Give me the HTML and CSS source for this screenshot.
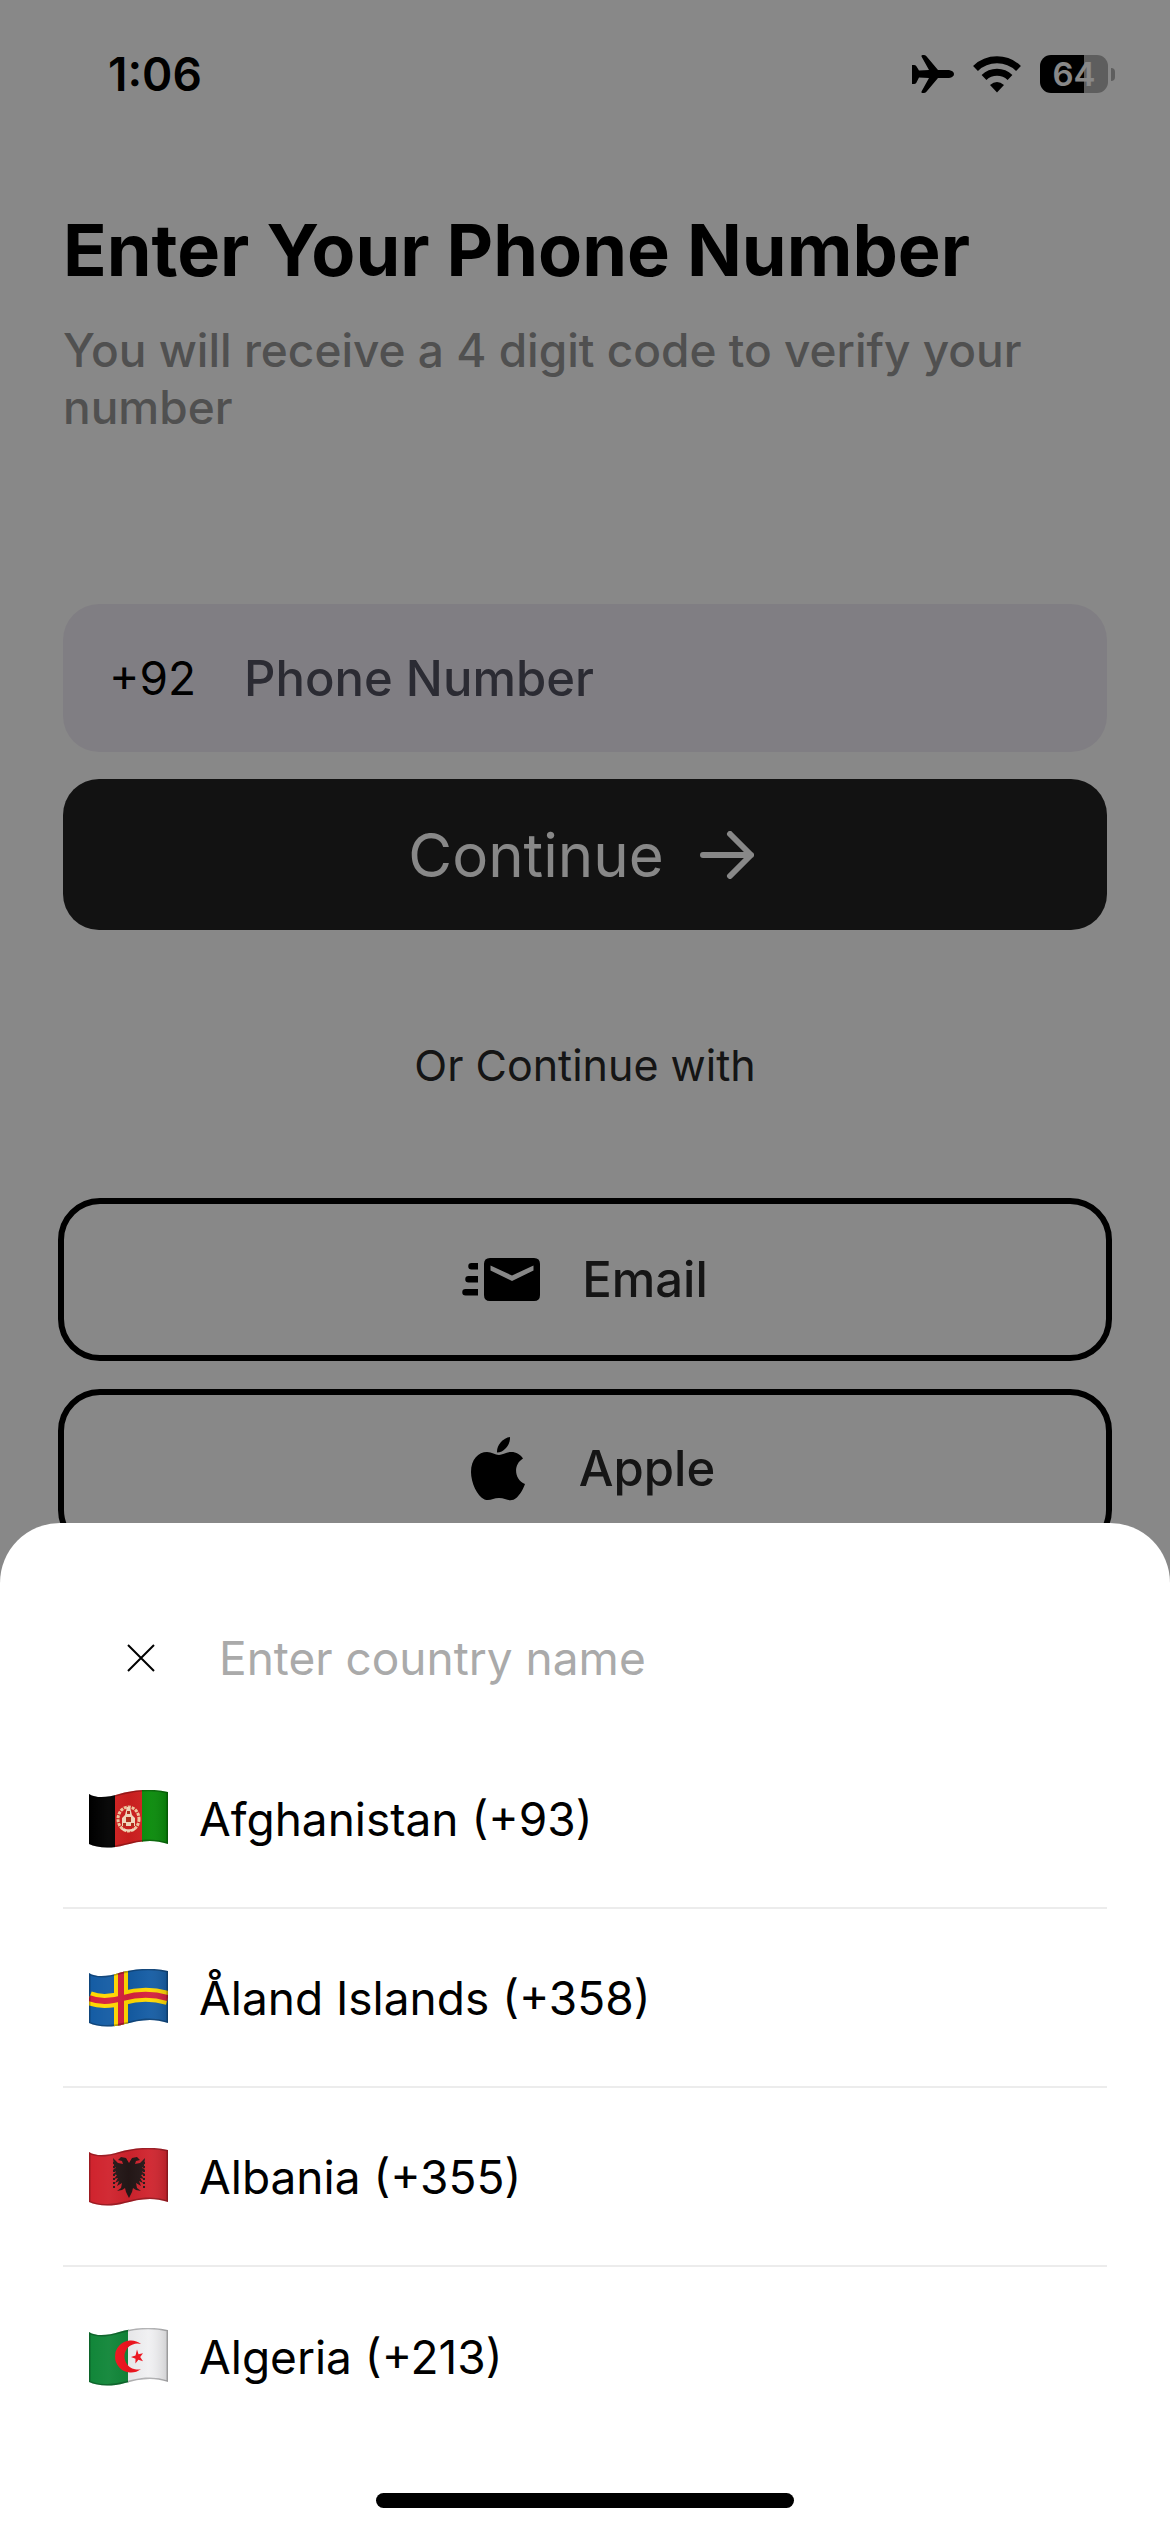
FILE: index.html
```html
<!DOCTYPE html>
<html lang="en">
<head>
<meta charset="utf-8">
<meta name="viewport" content="width=device-width, initial-scale=1">
<title>Enter Your Phone Number</title>
<link rel="stylesheet" href="styles.css">
</head>
<body>
<div class="screen">
  <header class="status">
    <span class="status-time">1:06</span>
    <div class="status-icons">
      <svg width="42" height="38" viewBox="0 0 42 38" aria-label="Airplane mode"><path d="M0 10h2q1.500 0 2.200 1L7 15.500l10-.5L9.500 1.500Q9 0 10.500 0h1.300q1.500 0 2.400 1L26 15h11q5 1 5 4t-5 4H26L14.200 37q-.9 1-2.400 1h-1.300q-1.500 0-1-1.500L17 23l-10-.5L4.200 28q-.7 1-2.200 1H0z"/></svg>
      <svg width="50" height="37" viewBox="0 0 50 37" aria-label="Wi-Fi"><g fill="none" stroke="#000" stroke-width="7"><path d="M3.500 12.500a31 31 0 0 1 43 0"/><path d="M12 21.500a19 19 0 0 1 26 0"/></g><path d="M25 36.500l-7-7.500q7-6 14 0z"/></svg>
      <div class="battery"><span class="battery-body">64</span><span class="battery-tip"></span></div>
    </div>
  </header>
  <main class="content">
    <h1 class="title">Enter Your Phone Number</h1>
    <p class="subtitle">You will receive a 4 digit code to verify your number</p>
    <form class="phone-form">
      <div class="phone-field">
        <span class="dial-code">+92</span>
        <input class="phone-input" type="tel" placeholder="Phone Number" aria-label="Phone Number">
      </div>
      <button class="continue" type="button">Continue
        <svg width="54" height="48" viewBox="0 0 54 48" fill="none" stroke="#fff" stroke-width="6" stroke-linecap="round" stroke-linejoin="round"><path d="M3 24h48M30 3l21 21-21 21"/></svg>
      </button>
    </form>
    <p class="divider-text">Or Continue with</p>
    <div class="providers">
      <button class="provider" type="button">
        <svg width="78" height="43" viewBox="0 0 78 43"><path d="M16 5v6.500H9.500a3.250 3.250 0 0 1 0-6.500zM16 18v6.500H6.500a3.250 3.250 0 0 1 0-6.500zM16 31v6.500H3.500a3.250 3.250 0 0 1 0-6.500z"/><path fill-rule="evenodd" d="M28 0h44q6 0 6 6v31q0 6-6 6H28q-6 0-6-6V6q0-6 6-6zm.5 7.500v5L50 23l21.500-10.500v-5L50 17.500z"/></svg>
        Email
      </button>
      <button class="provider provider-apple" type="button">
        <svg width="54" height="64" viewBox="0 0 54 64"><path d="M39 0c.5 8-6 15.500-13 15.500C25.500 8 32 1 39 0z"/><path d="M52 21.500c-10 6-9 21 2 25.500-2 6-7 14-11.500 15.800C37 64.500 34 61 28 61s-9 3.500-14.500 1.500C6 59 0 45.500 0 35 0 22 7.500 15 16 15c5 0 8 3 12 3 3.500 0 7-3 12.500-3 4.500 0 9 2.500 11.500 6.500z"/></svg>
        Apple
      </button>
    </div>
  </main>
</div>

<div class="scrim">
  <section class="sheet" role="dialog" aria-label="Choose a country">
    <div class="search">
      <button class="close" type="button" aria-label="Close"><svg width="28" height="28" viewBox="0 0 28 28" fill="none" stroke="#000" stroke-width="2"><path d="M1 1l26 26M27 1L1 27"/></svg></button>
      <input class="search-input" type="text" placeholder="Enter country name" aria-label="Enter country name">
    </div>
    <ul class="countries">
      <li class="country">
        <svg class="flag" viewBox="0 0 79 58">
          <defs>
            <path id="wave" d="M0 4C8 9 20 7 30 4 44 0 62-2 79 2V54C62 48 48 52 36 55 22 59 8 58 0 54Z"/>
            <clipPath id="cloth"><use href="#wave"/></clipPath>
            <linearGradient id="fold"><stop offset="0" stop-color="#fff" stop-opacity="0"/><stop offset=".25" stop-color="#fff" stop-opacity=".04"/><stop offset=".5" stop-opacity=".04"/><stop offset=".75" stop-color="#fff" stop-opacity=".04"/><stop offset="1" stop-opacity=".14"/></linearGradient>
            <g id="shade"><use href="#wave" fill="url(#fold)"/><use href="#wave" fill="none" stroke="#000" stroke-opacity=".25" stroke-width="3"/></g>
          </defs>
          <g clip-path="url(#cloth)">
            <path d="M0 0h26v58H0z"/><path fill="#cf1f1f" d="M26 0h28v58H26z"/><path fill="#078a08" d="M53 0h26v58H53z"/>
            <ellipse cx="39.500" cy="29" rx="10.500" ry="12" fill="none" stroke="#f3c9a0" stroke-width="3" stroke-dasharray="3 1"/>
            <path fill="#f7dcc0" d="M33 36v-8l3-3 2-8h3l2 8 3 3v8z"/><path fill="#b5301c" d="M37 27h5v5h-5zM34 33h3v3h-3zM42 33h3v3h-3zM38 21h3v3h-3z"/><path d="M33 39q6.500 3 13 0" fill="none" stroke="#f7dcc0" stroke-width="2"/>
            <use href="#shade"/>
          </g>
        </svg>
        Afghanistan (+93)
      </li>
      <li class="country">
        <svg class="flag" viewBox="0 0 79 58">
          <g clip-path="url(#cloth)">
            <path fill="#145ca4" d="M0 0h79v58H0z"/>
            <g fill="none" stroke="#ffd800" stroke-width="14"><path d="M32 0v58"/><path d="M0 29C12 34 24 32 34 29 48 25 62 24 79 29"/></g>
            <g fill="none" stroke="#d5203c" stroke-width="6"><path d="M32 0v58"/><path d="M0 29C12 34 24 32 34 29 48 25 62 24 79 29"/></g>
            <use href="#shade"/>
          </g>
        </svg>
        Åland Islands (+358)
      </li>
      <li class="country">
        <svg class="flag" viewBox="0 0 79 58">
          <g clip-path="url(#cloth)">
            <path fill="#d0232d" d="M0 0h79v58H0z"/>
            <path fill="#241717" d="M40 15l-3-5-5-1-3 3 4 1 1 3-5-1-5-5 1 8 2 2-3 1 3 3-3 2 4 1-3 4 4-1-3 5 4-2-2 5 5-3-1 5-4 3 5-1 3-2 1 4 3 6 3-6 1-4 3 2 5 1-4-3-1-5 5 3-2-5 4 2-3-5 4 1-3-4 4-1-3-2 3-3-3-1 2-2 1-8-5 5-5 1 1-3 4-1-3-3-5 1z"/>
            <path d="M25 14v27M55 14v27" stroke="#241717" stroke-width="2" stroke-dasharray="2 2"/>
            <use href="#shade"/>
          </g>
        </svg>
        Albania (+355)
      </li>
      <li class="country">
        <svg class="flag" viewBox="0 0 79 58">
          <g clip-path="url(#cloth)">
            <path fill="#118639" d="M0 0h40v58H0z"/><path fill="#f0f0f2" d="M39 0h40v58H39z"/>
            <path fill="#f0141e" d="M52 16A16 16 0 1 0 52 41 13 13 0 1 1 52 16zM48 21.500l1.500 4.700 4.500-1-2.800 3.800 2.800 4.300-4.600-1.500-3 3.700.1-4.700-4.500-1.800 4.500-1.500z"/>
            <use href="#shade"/>
          </g>
        </svg>
        Algeria (+213)
      </li>
    </ul>
    <div class="home-indicator"></div>
  </section>
</div>
</body>
</html>
```

FILE: styles.css
```css
* { box-sizing: border-box; }
body {
  margin: 0;
  background: #fff;
  color: #000;
  font-family: Inter, "Liberation Sans", sans-serif;
  font-size: 46px;
}
h1, p, ul { margin: 0; padding: 0; }
ul { list-style: none; }
button, input { font: inherit; color: inherit; border: 0; background: none; padding: 0; margin: 0; }
input { min-width: 0; flex: 1; outline: 0; }

.screen { height: 100vh; overflow: hidden; }

.status {
  display: flex;
  align-items: center;
  justify-content: space-between;
  height: 148px;
  padding: 0 55px 0 108px;
}
.status-time { font-weight: 600; }
.status-icons { display: flex; align-items: center; gap: 18px; }
.battery { display: flex; align-items: center; gap: 3px; }
.battery-body {
  width: 68px;
  line-height: 38px;
  border-radius: 11px;
  background: linear-gradient(90deg, #000 65%, #b0b0b0 65%);
  color: #fff;
  font-size: 33px;
  font-weight: 600;
  text-align: center;
}
.battery-tip { width: 4px; height: 13px; border-radius: 0 6px 6px 0; background: #b0b0b0; }

.content { padding: 56px 63px 0; }
.title { font-size: 72px; line-height: 92px; font-weight: 700; }
.subtitle { margin-top: 26px; line-height: 57px; font-weight: 500; color: #969696; }

.phone-form { display: grid; gap: 27px; margin-top: 168px; }
.phone-field {
  display: flex;
  align-items: center;
  gap: 48px;
  height: 148px;
  padding: 0 46px;
  border-radius: 36px;
  background: #f1edf6;
}
.phone-input { font-size: 49px; font-weight: 500; }
.phone-input::placeholder { color: #525260; opacity: 1; }
.continue {
  display: flex;
  align-items: center;
  justify-content: center;
  gap: 36px;
  height: 151px;
  padding-right: 8px;
  border-radius: 36px;
  background: #222;
  color: #fff;
  font-size: 60px;
}
.divider-text { margin-top: 108px; line-height: 54px; text-align: center; font-size: 43px; color: #282828; }
.providers { display: grid; gap: 28px; margin: 106px -5px 0; }
.provider {
  display: flex;
  align-items: center;
  justify-content: center;
  gap: 42px;
  height: 163px;
  border: 6px solid #000;
  border-radius: 42px;
  color: #282828;
  font-size: 49px;
  font-weight: 500;
}
.provider svg { fill: #000; }
.provider-apple { gap: 54px; padding: 0 0 4px 16px; }

.scrim {
  position: fixed;
  inset: 0;
  display: flex;
  flex-direction: column;
  justify-content: flex-end;
  background: rgba(0, 0, 0, 0.467);
}
.sheet { padding: 63px 63px 24px; border-radius: 60px 60px 0 0; background: #fff; }
.search { display: flex; align-items: center; gap: 51px; height: 144px; padding-left: 51px; }
.close { display: grid; place-items: center; width: 54px; height: 54px; }
.search-input::placeholder { color: #aaa; opacity: 1; }
.country { display: flex; align-items: center; gap: 31px; height: 179px; padding-left: 26px; }
.country:not(:last-child) { border-bottom: 2px solid #ececec; }
.flag { width: 79px; height: 58px; }
.home-indicator { width: 418px; height: 15px; margin: 47px auto 0; border-radius: 8px; background: #000; }
```
